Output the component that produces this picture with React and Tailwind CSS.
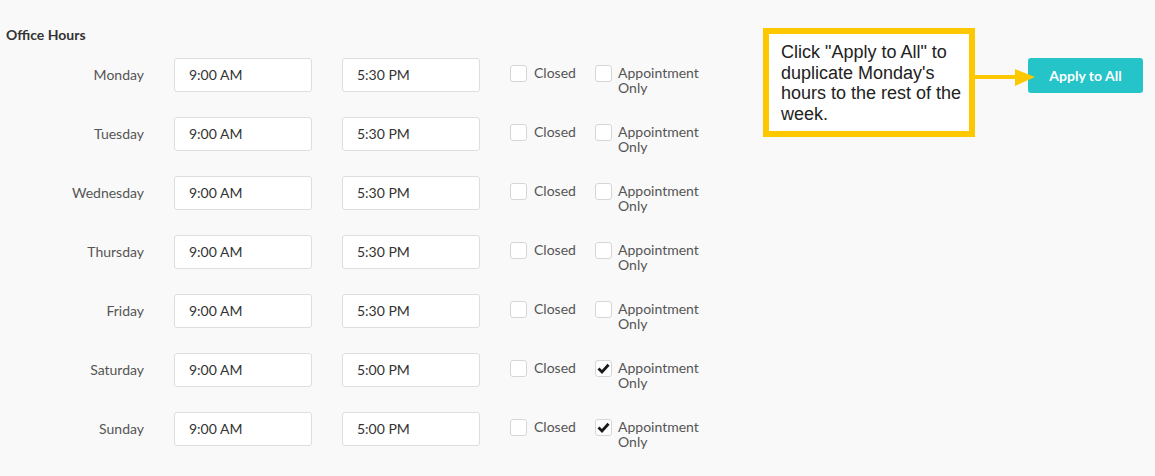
const days = [
  { name: "Monday", open: "9:00 AM", close: "5:30 PM", appt: false },
  { name: "Tuesday", open: "9:00 AM", close: "5:30 PM", appt: false },
  { name: "Wednesday", open: "9:00 AM", close: "5:30 PM", appt: false },
  { name: "Thursday", open: "9:00 AM", close: "5:30 PM", appt: false },
  { name: "Friday", open: "9:00 AM", close: "5:30 PM", appt: false },
  { name: "Saturday", open: "9:00 AM", close: "5:00 PM", appt: true },
  { name: "Sunday", open: "9:00 AM", close: "5:00 PM", appt: true },
];

function Box({ checked }) {
  return (
    <span className="flex h-[17px] w-[17px] shrink-0 items-center justify-center rounded-[3px] border border-[#d6d6d6] bg-white">
      {checked && (
        <svg width="13" height="11" viewBox="0 0 13 11">
          <path d="M1.5 5.5 L5 9 L11.5 1.8" fill="none" stroke="#1a1a1a" strokeWidth="2.8" />
        </svg>
      )}
    </span>
  );
}

function TimeInput({ value }) {
  return (
    <div className="flex h-[34px] w-[138px] shrink-0 items-center rounded-[3px] border border-[#dedede] bg-white px-[14px] pb-[2px] text-[14px] text-[#333]">
      {value}
    </div>
  );
}

function DayRow({ day, first }) {
  return (
    <div className="flex h-[34px] items-start">
      <div className="flex h-[34px] w-[144px] shrink-0 items-center justify-end pb-[2px] text-[14px] text-[#555]">
        {day.name}
      </div>
      <div className="ml-[30px] flex gap-[30px]">
        <TimeInput value={day.open} />
        <TimeInput value={day.close} />
      </div>
      <div className="ml-[30px] mt-[7px] flex w-[85px] shrink-0 items-start gap-[7px]">
        <Box checked={false} />
        <span className="text-[14px] leading-[15px] text-[#555]">Closed</span>
      </div>
      <div className="mt-[7px] flex items-start gap-[6px]">
        <Box checked={day.appt} />
        <span className="text-[14px] leading-[15px] text-[#555]">
          Appointment
          <br />
          Only
        </span>
      </div>
      {first && (
        <button className="ml-auto h-[35px] w-[115px] rounded-[3px] bg-[#24c4c8] text-[14px] font-bold text-white">
          Apply to All
        </button>
      )}
    </div>
  );
}

export default function App() {
  return (
    <div className="relative min-h-[476px] w-full bg-[#f9f9f9] pr-[12px] pt-[26px] font-['Lato',sans-serif]">
      <h2 className="pl-[6px] text-[14px] font-bold leading-[18px] text-[#333]">Office Hours</h2>
      <div className="mt-[14px] flex flex-col gap-[25px]">
        {days.map((d, i) => (
          <DayRow key={d.name} day={d} first={i === 0} />
        ))}
      </div>

      {/* callout annotation */}
      <div className="absolute left-[763px] top-[28px] h-[109px] w-[212px] border-[6px] border-[#fdc800] bg-white pl-[12px] pr-[6px] pt-[8px] font-['Liberation_Sans',Arial,sans-serif] text-[18px] leading-[20.5px] text-[#222]">
        Click "Apply to All" to duplicate Monday's hours to the rest of the week.
      </div>
      <svg className="absolute left-[975px] top-[68px]" width="62" height="20" viewBox="0 0 62 20">
        <rect x="0" y="7" width="42" height="4" fill="#fdc800" />
        <polygon points="40,1 60,9 40,18" fill="#fdc800" />
      </svg>
    </div>
  );
}
